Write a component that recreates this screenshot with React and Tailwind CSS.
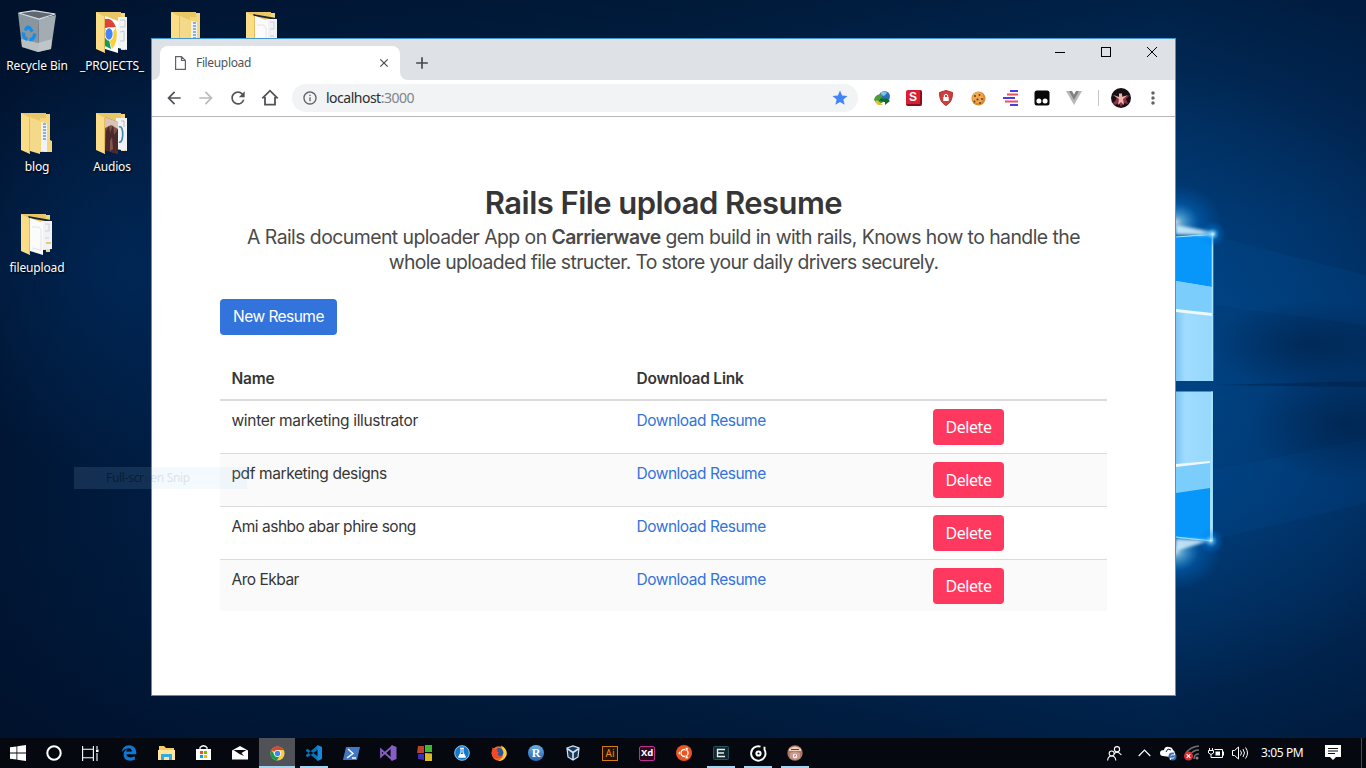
import React from "react";
import { MdArrowBack, MdArrowForward, MdRefresh, MdStar, MdMoreVert, MdInfoOutline, MdClose, MdAdd } from "react-icons/md";
import { FaEdgeLegacy } from "react-icons/fa";

function Wallpaper() {
  return (
    <svg className="absolute inset-0" width="1366" height="768" viewBox="0 0 1366 768">
      <defs>
        <linearGradient id="base" x1="0" y1="0" x2="1" y2="0">
          <stop offset="0" stopColor="#001634" />
          <stop offset="0.12" stopColor="#001d42" />
          <stop offset="0.5" stopColor="#00264f" />
          <stop offset="0.85" stopColor="#00356c" />
          <stop offset="1" stopColor="#002a5a" />
        </linearGradient>
        <linearGradient id="shade" x1="0" y1="0" x2="0" y2="1">
          <stop offset="0" stopColor="#000d22" stopOpacity="0.5" />
          <stop offset="0.3" stopColor="#001733" stopOpacity="0" />
          <stop offset="0.65" stopColor="#001733" stopOpacity="0" />
          <stop offset="0.95" stopColor="#000d24" stopOpacity="0.5" />
        </linearGradient>
        <radialGradient id="leftGlow" cx="130" cy="270" r="210" gradientUnits="userSpaceOnUse">
          <stop offset="0" stopColor="#002c60" stopOpacity="0.65" />
          <stop offset="1" stopColor="#002c60" stopOpacity="0" />
        </radialGradient>
        <radialGradient id="rightGlow" cx="1180" cy="380" r="310" gradientUnits="userSpaceOnUse">
          <stop offset="0" stopColor="#004d95" stopOpacity="0.6" />
          <stop offset="1" stopColor="#00509b" stopOpacity="0" />
        </radialGradient>
        <radialGradient id="darkCloud">
          <stop offset="0" stopColor="#001d42" stopOpacity="0.55" />
          <stop offset="1" stopColor="#001d42" stopOpacity="0" />
        </radialGradient>
        <radialGradient id="flare">
          <stop offset="0" stopColor="#ffffff" />
          <stop offset="0.15" stopColor="#7fd6ff" stopOpacity="0.85" />
          <stop offset="0.5" stopColor="#0086ee" stopOpacity="0.4" />
          <stop offset="1" stopColor="#0070dd" stopOpacity="0" />
        </radialGradient>
        <linearGradient id="pane" x1="1176" y1="0" x2="1213" y2="0" gradientUnits="userSpaceOnUse">
          <stop offset="0" stopColor="#7cc6f2" />
          <stop offset="0.25" stopColor="#a0dcff" />
          <stop offset="1" stopColor="#96d8fc" />
        </linearGradient>
        <filter id="soft" x="-30%" y="-60%" width="160%" height="220%"><feGaussianBlur stdDeviation="1.5" /></filter>
      </defs>
      <rect width="1366" height="768" fill="url(#base)" />
      <rect width="1366" height="768" fill="url(#shade)" />
      <rect width="400" height="560" fill="url(#leftGlow)" />
      <rect x="860" width="506" height="768" fill="url(#rightGlow)" />
      <path d="M1213 236 1366 275V325L1213 305Z" fill="#0064b8" opacity=".12" />
      <path d="M1213 540 1366 503V440L1213 470Z" fill="#0064b8" opacity=".1" />
      <ellipse cx="1310" cy="345" rx="100" ry="45" fill="url(#darkCloud)" />
      <ellipse cx="1345" cy="425" rx="95" ry="55" fill="url(#darkCloud)" />
      <path d="M1213 385 1366 381V387Z" fill="#001c40" opacity=".4" />
      <ellipse cx="1176" cy="222" rx="46" ry="38" fill="url(#flare)" opacity=".75" />
      <ellipse cx="1176" cy="552" rx="46" ry="38" fill="url(#flare)" opacity=".75" />
      <path d="M1176 237 1213 234V381H1176Z" fill="url(#pane)" />
      <path d="M1176 237 1212 235V287L1176 281Z" fill="#0796fa" />
      <path d="M1176 281 1212 287V315L1176 310Z" fill="#7bcdfb" />
      <path d="M1176 309 1212 313V316L1176 312Z" fill="#edf8ff" />
      <path d="M1176 391.500H1213V541L1176 538Z" fill="url(#pane)" />
      <path d="M1176 466 1210 461V489L1176 494Z" fill="#7bcdfb" />
      <path d="M1176 464 1210 461V463L1176 467Z" fill="#edf8ff" />
      <path d="M1176 493 1210 488V540L1176 538Z" fill="#0796fa" />
      <path d="M1176 225 1214 232 1214 236 1176 234Z" fill="#d8f3ff" opacity=".85" filter="url(#soft)" />
      <path d="M1176 551 1212 540 1176 539Z" fill="#d5f2ff" opacity=".85" filter="url(#soft)" />
      <path d="M1176 237 1213 234M1176 537 1211 541" stroke="#9be2ff" fill="none" />
      <path d="M1212.500 234V381M1212 391.500 1211 541" stroke="#a8e5ff" strokeWidth="1.600" fill="none" />
      <circle cx="1213" cy="234" r="13" fill="url(#flare)" opacity=".8" />
      <circle cx="1211" cy="541" r="13" fill="url(#flare)" opacity=".8" />
    </svg>
  );
}

function Folder({ kind }) {
  return (
    <svg width="32" height="42" viewBox="0 0 32 42">
      <path d="M0 0H25V6H28V36H6Z" fill="#e9c767" />
      <path d="M25 1H29V38H25Z" fill="#f3d683" />
      {kind === "projects" && (
        <g>
          <path d="M22 5H31V38L22 36Z" fill="#f3f4f5" />
          <path d="M24 8h5v7h-5M24 20l4-1v10h-4" stroke="#b9bfc6" fill="none" strokeWidth=".8" />
          <path d="M9 4 22 9V41L9 37Z" fill="#fff" />
          <path d="M9 7Q16 5 20 15L9 16Z" fill="#db4437" />
          <path d="M20 15Q23 29 16 37L13 27Z" fill="#ffcd40" />
          <path d="M9 16 13 28 15 37 9 34Z" fill="#0f9d58" />
          <ellipse cx="13" cy="22" rx="4.500" ry="6.800" fill="#fff" />
          <ellipse cx="13" cy="22" rx="3.600" ry="5.700" fill="#4285f4" />
        </g>
      )}
      {kind === "blog" && (
        <g>
          <path d="M9 4 19 8V41L9 38Z" fill="#f5d98b" />
          <path d="M19 5H29V27L31 28V39H19Z" fill="#f6d57b" />
          <path d="M20 9 26 10V39L20 38Z" fill="#eef3f7" />
          <path d="M22 11h3M22 14h3M22 17h3M22 20h3M22 23h3M22 26h3" stroke="#6d9bc6" strokeWidth="1.600" />
        </g>
      )}
      {kind === "audios" && (
        <g>
          <path d="M20 5H31V38L20 36Z" fill="#f0f2f4" />
          <path d="M23 14C28 11 28 31 23 29" stroke="#4385a9" strokeWidth="1.600" fill="none" />
          <path d="M25 8h3v6" stroke="#a7adb5" fill="none" strokeWidth=".8" />
          <path d="M9 4 22 9V41L9 37Z" fill="#7c5147" />
          <path d="M9 4 22 9V16L15 12 9 15Z" fill="#dcc3b8" />
          <path d="M10 18 13 13 14 20 17 12 18 22 22 16V41L9 37Z" fill="#4b282c" />
          <path d="M14 28 16 24 17 36 14 38Z" fill="#85544c" />
        </g>
      )}
      {kind === "docs" && (
        <g>
          <path d="M7 2 30 6V8L8 4Z" fill="#162637" />
          <path d="M20 7H31V35L20 36Z" fill="#f0f2f4" />
          <path d="M24 10h4v7h-4M24 24h4" stroke="#c5cad1" fill="none" strokeWidth=".8" />
          <path d="M25 29h5" stroke="#e6b35f" strokeWidth="1.500" />
          <path d="M9 4 22 9V41L9 37Z" fill="#fbfbfc" />
          <path d="M11 13h7l2 3v20l-9-2" stroke="#dcdfe3" fill="none" strokeWidth=".8" />
        </g>
      )}
      <path d="M0 0 9 5V41L0 37Z" fill="#fbdd87" />
      <path d="M8.500 5V41" stroke="#e4bc5b" />
    </svg>
  );
}

function RecycleBin() {
  return (
    <svg className="-mt-[2px]" width="38" height="43" viewBox="0 0 38 43">
      <path d="M0 3 21 9 20 42 4 37Z" fill="#8996a0" />
      <path d="M21 9 38 5 33 39 20 42Z" fill="#a3acb3" />
      <path d="M3 29 20 33 34 29 33 39 20 42 4 37Z" fill="#ccd1d2" opacity=".7" />
      <path d="M.6 3 16 .6 37.400 4 21 9Z" fill="#5e6871" stroke="#dbe1e4" strokeWidth="1.200" />
      <g fill="none" stroke="#168ee9" strokeWidth="3.400">
        <path d="M7.500 20.500Q8.500 16.500 11 17.500L14.500 21.500" />
        <path d="M5.500 22.500Q5 28 9.500 29.500" />
        <path d="M11.500 29.500Q16 30 16.800 23.500" />
      </g>
    </svg>
  );
}

function DesktopIcon({ label, place, children }) {
  return (
    <div className={`absolute flex w-[76px] flex-col items-center ${place}`}>
      <div className="flex h-[46px] items-start">{children}</div>
      <span className="font-['Noto_Sans','Open_Sans',sans-serif] text-[12px] leading-4 tracking-[-0.15px] whitespace-nowrap text-white [text-shadow:1px_1px_2px_#000]">{label}</span>
    </div>
  );
}

function ChromeLogo() {
  return (
    <svg width="15" height="15" viewBox="0 0 16 16">
      <circle cx="8" cy="8" r="7.500" fill="#ffcd40" />
      <path d="M8 8 1.500 4.200A7.500 7.500 0 0 1 14.500 4.200H8Z" fill="#db4437" />
      <path d="M1.500 4.200A7.500 7.500 0 0 0 7.300 15.500L11 9.500 5 9.800Z" fill="#0f9d58" />
      <circle cx="8" cy="8" r="3.700" fill="#fff" />
      <circle cx="8" cy="8" r="2.900" fill="#4285f4" />
    </svg>
  );
}

function Extensions() {
  const slot = "flex w-8 justify-center";
  return (
    <div className="flex items-center">
      <div className={slot}>
        <svg width="17" height="16" viewBox="0 0 17 16">
          <circle cx="10.500" cy="6.500" r="5.500" fill="#2f6fc0" />
          <path d="M7 2q4-2 6 1l-3 3-3-1Z" fill="#7fc3ea" />
          <path d="M1 7q3-4 8-2l-2 3 4 1-3 4H3L0 10Z" fill="#4f9c3a" />
          <path d="m7 8 5 1-1-2 5 4-5 4V12l-6-1Z" fill="#126b26" />
          <path d="m3 10 6 5H4l-3-3Z" fill="#e0be35" />
        </svg>
      </div>
      <div className={slot}>
        <div className="flex h-4 w-4 items-center justify-center rounded-[2px] border-r-2 border-b-2 border-[#8c0d19] bg-[#d91f31] font-['Liberation_Sans',sans-serif] text-[12px] leading-none font-bold text-white">S</div>
      </div>
      <div className={slot}>
        <svg width="14" height="16" viewBox="0 0 14 16">
          <path d="M7 .5 13.500 2.500C13.500 9 11.500 13 7 15.500C2.500 13 .5 9 .5 2.500Z" fill="#cf3d3c" stroke="#b12c2f" />
          <rect x="4.300" y="7" width="5.400" height="4" fill="#fff" />
          <path d="M5.400 7V5.500Q7 3 8.600 5.500V7" fill="none" stroke="#fff" strokeWidth="1.100" />
        </svg>
      </div>
      <div className={slot}>
        <svg width="15" height="15" viewBox="0 0 15 15">
          <circle cx="7.500" cy="7.500" r="7" fill="#d98b32" />
          <circle cx="6.800" cy="6.500" r="5.500" fill="#eca852" />
          <g fill="#703a13"><circle cx="4" cy="5" r="1" /><circle cx="8.500" cy="4" r=".9" /><circle cx="6.500" cy="8.500" r="1.100" /><circle cx="11" cy="8" r="1" /><circle cx="9" cy="12" r=".9" /><circle cx="3.500" cy="10.500" r=".9" /></g>
        </svg>
      </div>
      <div className={slot}>
        <svg width="16" height="16" viewBox="0 0 16 16" strokeWidth="2">
          <path d="M8 1h8M1 8h12M8 15h8" stroke="#4a3fe0" />
          <path d="M5 4.500h11M3 11.500h13" stroke="#f04f62" />
        </svg>
      </div>
      <div className={slot}>
        <svg width="16" height="16" viewBox="0 0 16 16"><rect x=".5" y=".5" width="15" height="15" rx="2.500" fill="#080808" /><circle cx="4.900" cy="11" r="2.500" fill="#fff" /><circle cx="11.100" cy="11" r="2.500" fill="#fff" /></svg>
      </div>
      <div className={slot}>
        <svg width="16" height="14" viewBox="0 0 16 14"><path d="M0 0H16L8 14Z" fill="#b8b8b8" /><path d="M3 0H13L8 9Z" fill="#828282" /><path d="M6 0H10L8 3.500Z" fill="#fff" /></svg>
      </div>
    </div>
  );
}

function BrowserChrome() {
  return (
    <>
      <div className="flex h-[41px] bg-[#dee1e6] text-[#3c4043]">
        <div className="flex w-2 items-end bg-white"><div className="h-full w-full rounded-br-[8px] bg-[#dee1e6]" /></div>
        <div className="mt-[7px] flex h-[34px] w-[240px] items-center rounded-t-[8px] bg-white pr-[9px] pl-[15px]">
          <svg width="11" height="14" viewBox="0 0 11 14" fill="none" stroke="#5f6368" strokeWidth="1.200"><path d="M.6.600H6.500L10.400 4.500V13.400H.6ZM6.500.600V4.500H10.400" /></svg>
          <span className="ml-[10px] flex-1 font-['Noto_Sans',sans-serif] text-[12px] tracking-[-0.35px] text-[#505357]">Fileupload</span>
          <MdClose className="text-[14px] text-[#45484c]" />
        </div>
        <div className="w-2 bg-white"><div className="h-full w-full rounded-bl-[8px] bg-[#dee1e6]" /></div>
        <MdAdd className="mt-[14px] ml-[4px] text-[20px] text-[#45484c]" />
        <svg className="mt-[7px] ml-auto" width="138" height="12" viewBox="0 0 138 12" fill="none" stroke="#000"><path d="M18 6.500h10" /><rect x="64.500" y="1.500" width="9" height="9" /><path d="m110 1 10 10m0-10-10 10" /></svg>
      </div>
      <div className="flex h-[37px] items-center border-b border-[#b6b6b8] pl-[6px] text-[#5f6368]">
        <div className="flex w-8 justify-center"><MdArrowBack className="text-[20px] text-[#505357]" /></div>
        <div className="flex w-8 justify-center"><MdArrowForward className="text-[20px] text-[#b9bbbd]" /></div>
        <div className="flex w-8 justify-center"><MdRefresh className="text-[20px] text-[#505357]" /></div>
        <div className="flex w-8 justify-center"><svg width="18" height="18" viewBox="0 0 18 18" fill="none" stroke="#505357" strokeWidth="1.800"><path d="M1.300 9.300 9 1.700 16.700 9.300M4 8V15.600H14V8" /></svg></div>
        <div className="ml-[6px] flex h-7 w-[566px] items-center rounded-full bg-[#f1f3f4] pr-[9px] pl-[10px]">
          <MdInfoOutline className="text-[16px]" />
          <span className="ml-2 flex-1 pb-px font-['Noto_Sans',sans-serif] text-[14px] tracking-[-0.5px] text-[#2b2d30]">localhost<span className="text-[#80858a]">:3000</span></span>
          <MdStar className="text-[18px] text-[#4285f4]" />
        </div>
        <div className="ml-2"><Extensions /></div>
        <div className="ml-[8px] h-4 w-px bg-[#c4c6c9]" />
        <svg className="ml-[12px]" width="20" height="20" viewBox="0 0 20 20"><circle cx="10" cy="10" r="10" fill="#171013" /><path d="m1 7 5 1-1 4-3 3 2 2 4-2 2 4 3-4 4 1-2-5 4-4-5 2-3-2-3 2Z" fill="#8d3145" /><path d="m2 7 6 2V5.500h3V9l6-2-5 4 1 6-3-3-3 3 1-6Z" fill="#eab8a8" /></svg>
        <MdMoreVert className="ml-[12px] text-[20px]" />
      </div>
    </>
  );
}

const resumes = [
  { name: "winter marketing illustrator", tracking: "tracking-[-0.32px]" },
  { name: "pdf marketing designs", tracking: "tracking-[-0.4px]" },
  { name: "Ami ashbo abar phire song", tracking: "tracking-[-0.48px]" },
  { name: "Aro Ekbar", tracking: "tracking-[-0.5px]" },
];

function ResumePage() {
  return (
    <main className="w-[955px] pl-[68px] font-['Inter',sans-serif] text-[15.5px] text-[#363636]">
      <header className="pt-[68px] text-center">
        <h1 className="text-[31px] leading-9 font-semibold tracking-[-0.55px]">Rails File upload Resume</h1>
        <p className="mt-[4px] text-[19.4px] leading-[25px] text-[#4a4a4a]">
          <span className="block tracking-[-0.55px] whitespace-nowrap">A Rails document uploader App on <b className="font-semibold">Carrierwave</b> gem build in with rails, Knows how to handle the</span>
          <span className="block tracking-[-0.64px] whitespace-nowrap">whole uploaded file structer. To store your daily drivers securely.</span>
        </p>
      </header>
      <button className="mt-[24px] flex h-9 w-[117px] items-center justify-center rounded-[4px] bg-[#3273dc] tracking-[-0.54px] whitespace-nowrap text-white">New Resume</button>
      <table className="mt-[23px] w-full table-fixed border-collapse text-left leading-6">
        <colgroup><col className="w-[405px]" /><col className="w-[296px]" /><col /></colgroup>
        <thead>
          <tr className="h-[42px] border-b-2 border-[#dbdbdb]">
            <th className="pr-3 pl-[11.5px] font-semibold tracking-[-0.24px]">Name</th>
            <th className="pr-3 pl-[11.5px] font-semibold tracking-[-0.24px]">Download Link</th>
            <th />
          </tr>
        </thead>
        <tbody>
          {resumes.map(({ name, tracking }) => (
            <tr key={name} className="h-[53px] border-b border-[#dbdbdb] align-top last:h-[52px] last:border-0 even:bg-[#fafafa]">
              <td className={`pt-2 pr-3 pl-[11.5px] whitespace-nowrap ${tracking}`}>{name}</td>
              <td className="pt-2 pr-3 pl-[11.5px] tracking-[-0.49px] text-[#3273dc]">Download Resume</td>
              <td className="px-3 pt-2"><button className="flex h-9 w-[71px] items-center justify-center rounded-[4px] bg-[#ff3860] font-['Noto_Sans',sans-serif] text-[16px] tracking-[-0.45px] text-white">Delete</button></td>
            </tr>
          ))}
        </tbody>
      </table>
    </main>
  );
}

function AppSlot({ active, running, children }) {
  return (
    <div className={`relative mr-px flex h-[30px] w-9 shrink-0 items-center justify-center ${active ? "bg-[#505257]" : ""}`}>
      {children}
      {active && <span className="absolute inset-x-0 bottom-0 h-[2px] bg-[#a5d3f2]" />}
      {running && <span className="absolute bottom-0 left-1 h-[2px] w-7 bg-[#a5d3f2]" />}
    </div>
  );
}

function Taskbar() {
  return (
    <footer className="relative flex h-[30px] items-center bg-[#05090f] text-white">
      <div className="flex w-9 justify-center"><svg width="16" height="16" viewBox="0 0 16 16" fill="#fff"><path d="M0 2.300 6.500 1.400V7.500H0ZM7.300 1.300 16 0V7.500H7.300ZM0 8.400H6.500V14.600L0 13.700ZM7.300 8.400H16V16L7.300 14.700Z" /></svg></div>
      <div className="flex w-9 justify-center"><svg width="16" height="16" viewBox="0 0 16 16"><circle cx="8" cy="8" r="6.700" fill="none" stroke="#fff" strokeWidth="2" /></svg></div>
      <div className="mr-[3px] flex w-9 justify-center"><svg width="17" height="15" viewBox="0 0 17 15" fill="none" stroke="#fff" strokeWidth="1.100"><path d="M.6 0V3.300H11.400V0M.6 3.300V11.700M11.400 3.300V11.700M.6 15V11.700H11.400V15M15 0V3M15 7V15" /><path d="M14 3.500h2.500v2.500H14Z" fill="#fff" stroke="none" /></svg></div>
      <AppSlot><FaEdgeLegacy className="text-[16px] text-[#0c79d5]" /></AppSlot>
      <AppSlot><svg width="17" height="15" viewBox="0 0 17 15"><path d="M1 0H6L8 2H16V14H1Z" fill="#f5cd64" /><path d="M0 4H17V14H0Z" fill="#fee69a" /><path d="M3 8H14V14H11V11H6V14H3Z" fill="#36a7e6" /></svg></AppSlot>
      <AppSlot><svg width="15" height="16" viewBox="0 0 15 16"><path d="M4 4V2.500Q7.500-1 11 2.500V4" fill="none" stroke="#fff" strokeWidth="1.200" /><path d="M0 4H15V15H0Z" fill="#fff" /><path d="M4 6H7V9H4Z" fill="#f25022" /><path d="M8 6H11V9H8Z" fill="#7fba00" /><path d="M4 10H7V13H4Z" fill="#00a4ef" /><path d="M8 10H11V13H8Z" fill="#ffb900" /></svg></AppSlot>
      <AppSlot><svg width="16" height="14" viewBox="0 0 16 14"><path d="M0 4.500 8 0 16 4.500V13.500H0Z" fill="#fff" /><path d="M1.500 4H14.500L9.500 7 12 10 7.500 8Z" fill="#090b10" /></svg></AppSlot>
      <AppSlot active><ChromeLogo /></AppSlot>
      <AppSlot running><svg width="16" height="16" viewBox="0 0 16 16"><path d="M0 5 1.500 3.800 12 11.500V16L0 6ZM0 11 1.500 12.200 12 4.500V0L0 10Z" fill="#0873b9" /><path d="M11.500 0 16 2V14L11.500 16Z" fill="#1787dc" /></svg></AppSlot>
      <AppSlot><svg width="17" height="13" viewBox="0 0 17 13"><path d="M3 0H17L14 13H0Z" fill="#4277c6" /><path d="m5 2 5 4.500L4 11M9 11h4" fill="none" stroke="#fff" strokeWidth="1.400" /></svg></AppSlot>
      <AppSlot><svg width="17" height="16" viewBox="0 0 17 16"><path d="M1 4.500V11.500L11.500 2V14Z" fill="none" stroke="#865fc5" strokeWidth="1.800" /><path d="M11.500 0 16.500 2V14L11.500 16Z" fill="#865fc5" /></svg></AppSlot>
      <AppSlot><svg width="16" height="16" viewBox="0 0 16 16"><path d="M1 1 7 1V8H0Z" fill="#b9432d" /><path d="M8 0H15V7H8Z" fill="#40b82b" /><path d="M1 9H7V15L1 14Z" fill="#4030b0" /><path d="M8 8 15 8.500V16H8Z" fill="#d9bc25" /></svg></AppSlot>
      <AppSlot><svg width="16" height="16" viewBox="0 0 16 16"><circle cx="8" cy="8" r="7.300" fill="#1378cb" stroke="#8cc9f2" /><path d="M6 3.200h4M7 3.200v4l-2.500 5h7L9 7.200v-4" fill="#fff" stroke="#fff" /><path d="m7.500 7.500-1 1.500h3l-1-1.500V4h-1Z" fill="#1378cb" /></svg></AppSlot>
      <AppSlot><svg width="16" height="16" viewBox="0 0 16 16"><circle cx="8" cy="8.500" r="7.300" fill="#f36a22" /><path d="M10 .5Q17 4 15.500 10.500 13 16 7 16 13 13 12 7Z" fill="#ffcd37" /><circle cx="8" cy="7.500" r="4.400" fill="#255aa3" /><path d="M.5 8 1.500 2.500 4 4.500 7 4.500 6 6.500 8.500 7.500Q5.500 8 7.500 10.200T12 9.500Q11 14 6 13.500T.5 8Z" fill="#ef4a28" /></svg></AppSlot>
      <AppSlot><div className="flex h-4 w-4 items-center justify-center rounded-full bg-gradient-to-b from-[#6aaee6] to-[#2664b5] font-['Liberation_Serif',serif] text-[12px] leading-none font-bold">R</div></AppSlot>
      <AppSlot><svg width="14" height="16" viewBox="0 0 14 16"><path d="m1 3 6-2 6 2-1 9-5 3-5-3Z" fill="#193958" stroke="#d6e5f5" strokeWidth="1.200" /><path d="m1 3.500 6 4 6-4M7 7.500V15" fill="none" stroke="#d6e5f5" strokeWidth="1.600" /></svg></AppSlot>
      <AppSlot><div className="flex h-[15px] w-4 items-center justify-center border border-[#d57915] bg-[#241303] font-['Noto_Sans',sans-serif] text-[10px] leading-none text-[#ef8b15]">Ai</div></AppSlot>
      <AppSlot><div className="flex h-[15px] w-4 items-center justify-center rounded-[2px] border border-[#c42b94] bg-[#2b0820] font-['Noto_Sans',sans-serif] text-[9.5px] leading-none font-bold tracking-[-0.3px]">Xd</div></AppSlot>
      <AppSlot><svg width="16" height="16" viewBox="0 0 16 16"><circle cx="8" cy="8" r="8" fill="#e95420" /><circle cx="8.500" cy="8" r="3.500" fill="none" stroke="#fff" strokeWidth="1.400" /><g fill="#fff" stroke="#e95420" strokeWidth=".6"><circle cx="3.600" cy="8" r="1.500" /><circle cx="10.700" cy="3.800" r="1.500" /><circle cx="10.700" cy="12.200" r="1.500" /></g></svg></AppSlot>
      <AppSlot running><svg width="16" height="14" viewBox="0 0 16 14"><rect x=".5" y=".5" width="15" height="13" rx="1" fill="#10282e" stroke="#28525a" /><path d="M12 3.500H4.500V10.500H12M5 7H11" fill="none" stroke="#e5f0f0" strokeWidth="1.300" /></svg></AppSlot>
      <AppSlot running><svg width="17" height="17" viewBox="0 0 17 17"><path d="M10.500 1.600A7.200 7.200 0 1 0 14.500 4.800V1.800" fill="none" stroke="#fff" strokeWidth="1.900" /><circle cx="8.500" cy="8.500" r="2.100" fill="none" stroke="#fff" strokeWidth="2" /></svg></AppSlot>
      <AppSlot running><svg width="16" height="16" viewBox="0 0 16 16"><circle cx="8" cy="8" r="7.700" fill="#ae7765" /><path d="M2 4Q8-1 14 4V6H2Z" fill="#efcebe" /><path d="M4 4.500h8" stroke="#7f3026" /><path d="M3 8q5-3 10 0v5l-5 2-5-2Z" fill="#c79a90" /><circle cx="8" cy="11" r="2.200" fill="#fff" /><path d="m8 9 1 2-2 1Z" fill="#cc3449" /></svg></AppSlot>

      <div className="ml-auto flex h-full items-center">
        <svg width="15" height="15" viewBox="0 0 15 15" fill="none" stroke="#fff" strokeWidth="1.100"><circle cx="10" cy="3.200" r="2.600" /><path d="M7 8Q10 4 14.400 9" /><circle cx="4.700" cy="7.500" r="2.500" /><path d="M.6 14.500Q1 10 4.700 10T8.800 14.500" /></svg>
        <svg className="ml-[16px]" width="13" height="8" viewBox="0 0 13 8" fill="none" stroke="#fff" strokeWidth="1.200"><path d="m.7 7 5.800-6 5.800 6" /></svg>
        <svg className="ml-[9px]" width="17" height="16" viewBox="0 0 17 16"><path d="M3 11Q0 11 0 8 0 5 4 5 5 1 9 2 12 2 13 5 15 6 15 9L10 12Z" fill="#fff" /><path d="m6 7 2-3 3 1" stroke="#1d2026" fill="none" /><circle cx="12.500" cy="11.500" r="4" fill="#316bb5" /><path d="M10.500 11q1-2 4-1V8M14.500 12q-1 2-4 1v2" stroke="#fff" fill="none" strokeWidth=".9" /></svg>
        <svg className="ml-[7px]" width="16" height="16" viewBox="0 0 16 16"><g fill="none" stroke="#6c6f73"><path d="M2 8Q6 2 15 1M6 10Q9 5 15 5M10 14Q10 9 15 9" strokeWidth="1.500" /></g><circle cx="13" cy="13" r="1.500" fill="#85888b" /><circle cx="4.500" cy="11" r="4.500" fill="#d92e31" /><path d="m2.700 9.200 3.600 3.600m0-3.600-3.600 3.600" stroke="#fff" strokeWidth="1.200" /></svg>
        <svg className="ml-[8px]" width="17" height="13" viewBox="0 0 17 13" fill="none" stroke="#fff"><path d="M1.500 1v2.500M4.500 1v2.500M.5 3.500h5v2.500q-2.500 3-5 0ZM3 7.500V10.500H14.500V2.500H6.500M15.500 4.500v4" /><path d="M7.500 4.500h4.500v4h-4.500Z" fill="#fff" stroke="none" /></svg>
        <svg className="ml-[7px]" width="17" height="14" viewBox="0 0 17 14" fill="none" stroke="#fff"><path d="M.5 4.500h2l4-3.500v12l-4-3.500h-2ZM8.500 4.500q2 2.500 0 5M11 3q3 4 0 8M13.500 1.500q4 5.500 0 11" /></svg>
        <span className="ml-[12px] w-[44px] font-['Noto_Sans',sans-serif] text-[12px] tracking-[-0.4px] whitespace-nowrap">3:05 PM</span>
        <svg className="ml-[20px]" width="16" height="16" viewBox="0 0 16 16"><path d="M0 0H16V12H11L8 15 5 12H0Z" fill="#fff" /><path d="M3 3.500h10M3 6h10M3 8.500h7" stroke="#0a0d12" /></svg>
        <span className="mr-[4px] ml-[20px] h-full w-px bg-[#474b51]" />
      </div>
    </footer>
  );
}

export default function App() {
  return (
    <div className="relative flex h-[768px] w-[1366px] flex-col overflow-hidden bg-[#001a3c]">
      <Wallpaper />
      <div className="relative flex-1">
        <DesktopIcon label="Recycle Bin" place="top-[12px] left-[-1px]"><RecycleBin /></DesktopIcon>
        <DesktopIcon label="_PROJECTS_" place="top-[12px] left-[74px]"><Folder kind="projects" /></DesktopIcon>
        <DesktopIcon label="" place="top-[12px] left-[149px]"><Folder kind="blog" /></DesktopIcon>
        <DesktopIcon label="" place="top-[12px] left-[224px]"><Folder kind="docs" /></DesktopIcon>
        <DesktopIcon label="blog" place="top-[113px] left-[-1px]"><Folder kind="blog" /></DesktopIcon>
        <DesktopIcon label="Audios" place="top-[113px] left-[74px]"><Folder kind="audios" /></DesktopIcon>
        <DesktopIcon label="fileupload" place="top-[214px] left-[-1px]"><Folder kind="docs" /></DesktopIcon>
        <section className="absolute top-[38px] left-[151px] h-[658px] w-[1025px] border border-[#4596cf] bg-white">
          <BrowserChrome />
          <ResumePage />
        </section>
        <div className="absolute top-[467px] left-[74px] flex h-[22px] w-[173px] items-center bg-gradient-to-r from-[#9ecdf51f] to-[#9ecdf51c] pl-8 font-['Noto_Sans',sans-serif] text-[12px] tracking-[-0.3px] whitespace-nowrap text-[#000a1c]/10">
          <span className="text-[#000814]/50">Full-scr</span>een Snip
        </div>
      </div>
      <Taskbar />
    </div>
  );
}
